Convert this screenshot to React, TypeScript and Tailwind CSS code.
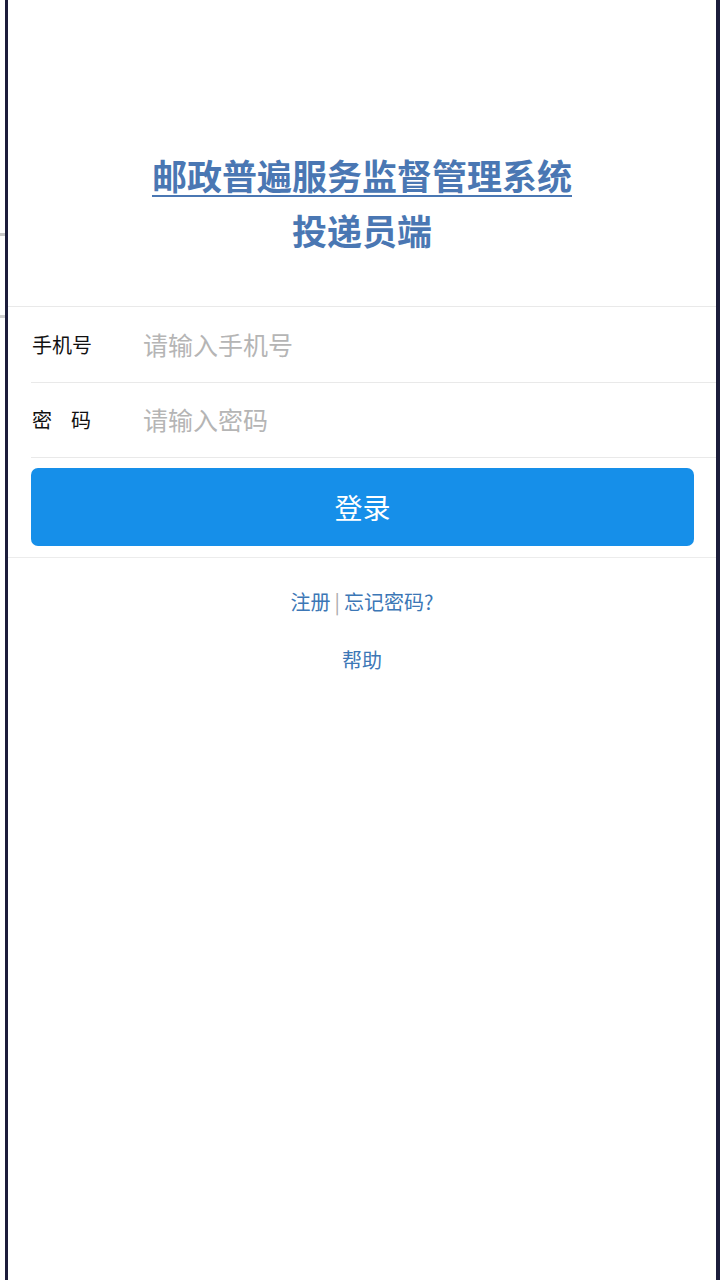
import { useState } from 'react';

const FONT = { fontFamily: '"Noto Sans CJK SC", "Noto Sans", sans-serif' };

export default function App() {
  const [phone, setPhone] = useState('');
  const [password, setPassword] = useState('');

  return (
    <div className="flex h-[1280px] w-[720px] bg-white" style={FONT}>
      {/* gutter with the little marks of the page behind */}
      <div className="relative w-[5px] shrink-0">
        <span className="absolute left-0 top-[233px] h-[3px] w-[5px] bg-[#c8c8c8]" />
        <span className="absolute left-0 top-[315px] h-[3px] w-[5px] bg-[#d0d0d0]" />
      </div>

      <div className="flex flex-1 flex-col border-l-[3px] border-r-[4px] border-[#1c1d3b]">
        {/* Titre */}
        <div className="pt-[147px] text-center text-[35px] leading-[55px] font-bold text-[#4a77b3]">
          <p className="underline decoration-2 underline-offset-[5px]">邮政普遍服务监督管理系统</p>
          <p>投递员端</p>
        </div>

        {/* Formulaire */}
        <div className="mt-[49px] border-t border-[#e9e9e9]">
          <label className="flex h-[75px] items-center pl-[24px]">
            <span className="w-[111px] shrink-0 text-[20px] text-[#111]">手机号</span>
            <input
              value={phone}
              onChange={(e) => setPhone(e.target.value)}
              placeholder="请输入手机号"
              className="min-w-0 flex-1 bg-transparent text-[25px] text-[#333] outline-none placeholder:text-[#b5b5b5]"
            />
          </label>
          <div className="ml-[23px] border-t border-[#e9e9e9]" />
          <label className="flex h-[74px] items-center pl-[24px]">
            <span className="flex w-[111px] shrink-0 text-[20px] text-[#111]">
              <span>密</span><span className="ml-[19px]">码</span>
            </span>
            <input
              type="password"
              value={password}
              onChange={(e) => setPassword(e.target.value)}
              placeholder="请输入密码"
              className="min-w-0 flex-1 bg-transparent text-[25px] text-[#333] outline-none placeholder:text-[#b5b5b5]"
            />
          </label>
          <div className="ml-[23px] border-t border-[#e9e9e9]" />

          <div className="pt-[10px] pb-[11px] pl-[23px] pr-[22px]">
            <button className="h-[78px] w-full rounded-[7px] bg-[#168fe9] text-[28px] text-white">
              登录
            </button>
          </div>
        </div>

        {/* Liens */}
        <div className="flex flex-col items-center border-t border-[#ececec] pt-[26px] text-[20px] text-[#3c77b6]">
          <p className="leading-[36px]">
            注册<span className="mx-[4px] text-[#aaa]">|</span>忘记密码?
          </p>
          <p className="mt-[22px] leading-[36px]">帮助</p>
        </div>
      </div>
    </div>
  );
}
